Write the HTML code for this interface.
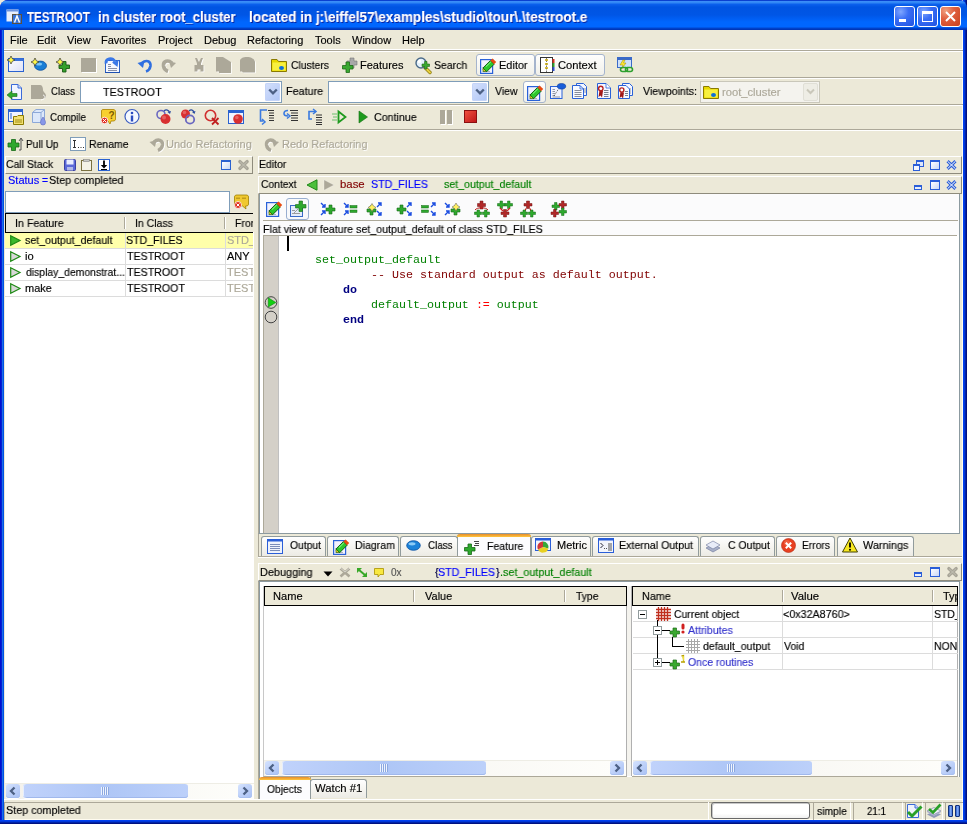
<!DOCTYPE html>
<html><head><meta charset="utf-8">
<style>
*{margin:0;padding:0;box-sizing:border-box}
html,body{width:967px;height:824px;overflow:hidden;background:#EEEADC;font-family:"Liberation Sans",sans-serif;font-size:11px;color:#000}
.a{position:absolute}
svg.a{overflow:visible}
.t{position:absolute;white-space:pre;line-height:13px;font-size:11px;will-change:transform;-webkit-text-stroke:0.15px currentColor}
#frame{position:absolute;left:0;top:0;width:967px;height:824px;background:linear-gradient(90deg,#0010D0 0,#0010D0 1px,#0620D0 1px,#0620D0 2px,#1A6CEA 2px,#1A6CEA 3px,#0052E2 3px,#0052E2 4px,#0A3BE0 4px);border-radius:8px 8px 0 0;overflow:hidden}
#frameR{position:absolute;left:963px;top:0;width:4px;height:824px;background:linear-gradient(90deg,#0040F0 0,#0040F0 1px,#0036D8 1px,#0036D8 2px,#0022A8 2px,#0022A8 3px,#001080 3px)}
#frameB{position:absolute;left:0;top:820px;width:967px;height:4px;background:linear-gradient(#0040F0 0,#0040F0 1px,#0036D8 1px,#0036D8 2px,#0022A8 2px,#0022A8 3px,#001080 3px)}
#title{position:absolute;left:0;top:0;width:967px;height:30px;border-radius:8px 8px 0 0;
 background:linear-gradient(180deg,#0A40D0 0px,#0A40D0 0.8px,#3D8EF9 1.2px,#3288F5 2.5px,#0A5FEC 4.5px,#0054E2 7px,#0056E6 15px,#005FF4 19px,#0066FE 22px,#0066FF 27px,#0046D0 28px,#0030B0 30px)}
#client{position:absolute;left:4px;top:30px;width:959px;height:790px;background:#ECE9D8;border-right:1px solid #FFFCF0;border-bottom:1px solid #FFFCF0}
.sep{position:absolute;left:4px;width:959px;height:2px;border-top:1px solid #ACA899;border-bottom:1px solid #fff}
.tb{position:absolute;border:1px solid #A5B4CD;border-radius:3px;background:linear-gradient(#FEFEFD,#F1F0EA)}
.combo{position:absolute;background:#fff;border:1px solid #7F9DB9}
.dd{position:absolute;width:15px;border-radius:2px;background:linear-gradient(135deg,#D4E0FC,#B0C6F6);box-shadow:inset 0 0 0 1px #C4D4F8}
.mono{font-family:"Liberation Mono",monospace}
.gray{color:#ACA899}
</style></head><body>
<div id="frame"></div>
<div id="frameR"></div>
<div id="frameB"></div>
<div id="title">
  <svg class="a" style="left:6px;top:9px" width="16" height="16" viewBox="0 0 16 16">
    <rect x="0.5" y="0.5" width="12" height="12" fill="#E8EEFC"/><rect x="0.5" y="0.5" width="12" height="2" fill="#6C93E0"/>
    <rect x="6.5" y="5.5" width="9" height="9" fill="#3A74D6" stroke="#5A5040" stroke-width="1"/>
    <path d="M8.5 13.5 L11 7 L13.5 13.5" stroke="#fff" stroke-width="1.4" fill="none"/>
  </svg>
  <div class="t" style="left:26.56px;top:10px;font-size:14px;font-weight:bold;color:#fff;line-height:15px;text-shadow:1px 1px 0 #0A1E9A;transform:scaleX(0.8240);transform-origin:0 0">TESTROOT</div>
  <div class="t" style="left:97.50px;top:10px;font-size:14px;font-weight:bold;color:#fff;line-height:15px;text-shadow:1px 1px 0 #0A1E9A;transform:scaleX(0.9358);transform-origin:0 0">in cluster root_cluster</div>
  <div class="t" style="left:248.89px;top:10px;font-size:14px;font-weight:bold;color:#fff;line-height:15px;text-shadow:1px 1px 0 #0A1E9A;transform:scaleX(0.9665);transform-origin:0 0">located in j:\eiffel57\examples\studio\tour\.\testroot.e</div>
  <!-- window buttons -->
  <div class="a" style="left:894px;top:6px;width:21px;height:21px;border:1px solid #fff;border-radius:3px;background:radial-gradient(circle at 30% 25%,#7FA6FF 0,#3A6EF5 40%,#1F52E0 100%)"><div class="a" style="left:4px;top:12px;width:7px;height:3px;background:#fff"></div></div>
  <div class="a" style="left:917px;top:6px;width:21px;height:21px;border:1px solid #fff;border-radius:3px;background:radial-gradient(circle at 30% 25%,#7FA6FF 0,#3A6EF5 40%,#1F52E0 100%)"><div class="a" style="left:4px;top:4px;width:11px;height:11px;border:1px solid #fff;border-top-width:3px"></div></div>
  <div class="a" style="left:940px;top:6px;width:21px;height:21px;border:1px solid #fff;border-radius:3px;background:radial-gradient(circle at 25% 20%,#F0A080 0,#E06040 40%,#C8401C 100%)">
    <svg class="a" style="left:4px;top:4px" width="11" height="11"><path d="M1 1 L10 10 M10 1 L1 10" stroke="#fff" stroke-width="2"/></svg></div>
</div>
<div id="client"></div>

<!-- menu -->
<div class="t" style="left:10px;top:34px">File</div>
<div class="t" style="left:37px;top:34px">Edit</div>
<div class="t" style="left:67px;top:34px">View</div>
<div class="t" style="left:101px;top:34px">Favorites</div>
<div class="t" style="left:158px;top:34px">Project</div>
<div class="t" style="left:204px;top:34px">Debug</div>
<div class="t" style="left:247px;top:34px">Refactoring</div>
<div class="t" style="left:315px;top:34px">Tools</div>
<div class="t" style="left:352px;top:34px">Window</div>
<div class="t" style="left:402px;top:34px">Help</div>
<div class="a" style="left:4px;top:49px;width:959px;height:3px;border-top:1px solid #fff;background:#ACA899;border-bottom:1px solid #fff"></div>
<div class="sep" style="top:77px"></div>
<div class="sep" style="top:104px"></div>
<div class="sep" style="top:129px"></div>

<!-- TOOLBAR1 -->
<svg class="a" style="left:8px;top:57px" width="16" height="16" viewBox="0 0 16 16">
 <defs><linearGradient id="gw" x1="0" y1="0" x2="1" y2="1"><stop offset="0" stop-color="#fff"/><stop offset="1" stop-color="#DCE0F8"/></linearGradient></defs>
 <rect x="0.5" y="1.5" width="15" height="13" fill="url(#gw)" stroke="#2A62D0"/><rect x="0.5" y="1.5" width="15" height="2.5" fill="#3B72DA"/>
 <path d="M3 -1 L4.3 1.7 L7 3 L4.3 4.3 L3 7 L1.7 4.3 L-1 3 L1.7 1.7Z" fill="#FFF84A" stroke="#333" stroke-width="0.7"/>
</svg>
<svg class="a" style="left:32px;top:57px" width="16" height="16" viewBox="0 0 16 16">
 <ellipse cx="8.5" cy="8.7" rx="6" ry="4.6" fill="#1A7ED6" stroke="#0A4FA0" stroke-width="0.8"/><ellipse cx="7" cy="7" rx="3" ry="1.5" fill="#7CC4F6"/>
 <path d="M3 1 L4.3 3.7 L7 5 L4.3 6.3 L3 9 L1.7 6.3 L-1 5 L1.7 3.7Z" fill="#FFF84A" stroke="#333" stroke-width="0.7"/>
</svg>
<svg class="a" style="left:56px;top:57px" width="16" height="16" viewBox="0 0 16 16">
 <path d="M6.5 4.5 H10 V8 H13.5 V11.5 H10 V15 H6.5 V11.5 H3 V8 H6.5Z" fill="#34A02C" stroke="#1A5A14" stroke-width="0.9"/>
 <path d="M4 1 L5.3 3.7 L8 5 L5.3 6.3 L4 9 L2.7 6.3 L0 5 L2.7 3.7Z" fill="#FFF84A" stroke="#333" stroke-width="0.7"/>
</svg>
<div class="a" style="left:81px;top:58px;width:15px;height:14px;background:#ACA899;box-shadow:1px 1px 0 #fff"></div>
<svg class="a" style="left:104px;top:57px" width="16" height="16" viewBox="0 0 16 16">
 <rect x="1.5" y="3.5" width="14" height="12" fill="#F6F8FF" stroke="#2E63C8"/><path d="M1 15.5 H16" stroke="#1E50B0"/>
 <path d="M4 7.5 H7 M4 9.5 H7 M4 11.5 H13 M4 13.5 H13" stroke="#8890A8"/>
 <path d="M2 6.5 C1.5 1.5 8 0 11 4.5" stroke="#3A78E8" stroke-width="2.8" fill="none"/><path d="M8 5.5 L14.5 3 L13.5 10Z" fill="#3A78E8"/>
</svg>
<svg class="a" style="left:137px;top:58px" width="16" height="16" viewBox="0 0 16 16">
 <path d="M5 5 C9 1.5 14 3 13.5 8 C13 11 11 12.8 9 13.5" stroke="#2F6FE0" stroke-width="2.6" fill="none"/>
 <path d="M0.5 5 L7.5 3 L6 10Z" fill="#2F6FE0"/>
</svg>
<svg class="a" style="left:161px;top:58px" width="16" height="16" viewBox="0 0 16 16">
 <path d="M11 5 C7 1.5 2 3 2.5 8 C3 11 5 12.8 7 13.5" stroke="#fff" stroke-width="3.6" fill="none" transform="translate(0.8,0.8)"/>
 <path d="M11 5 C7 1.5 2 3 2.5 8 C3 11 5 12.8 7 13.5" stroke="#ACA899" stroke-width="3.6" fill="none"/>
 <path d="M15 5 L8 3 L10 10Z" fill="#ACA899"/>
</svg>
<svg class="a" style="left:194px;top:57px" width="12" height="16" viewBox="0 0 12 16">
 <g transform="translate(0.8,0.8)" fill="#fff"><path d="M1 1 H3 L5 5 L7 1 H9 L7 6.5 V8 H9.5 V14.5 H6.5 V12.5 H3.5 V14.5 H0.5 V8 H3 V6.5Z"/></g>
 <path d="M1 1 H3 L5 5 L7 1 H9 L7 6.5 V8 H9.5 V14.5 H6.5 V12.5 H3.5 V14.5 H0.5 V8 H3 V6.5Z" fill="#ACA899"/>
</svg>
<svg class="a" style="left:216px;top:57px" width="16" height="17" viewBox="0 0 16 17">
 <path d="M0 0 H7 L15 5 V16 H3 V14.5 H0Z" fill="#fff" transform="translate(0.8,0.8)"/>
 <path d="M0 0 H7 L15 5 V16 H3 V14.5 H0Z" fill="#ACA899"/>
</svg>
<svg class="a" style="left:240px;top:57px" width="16" height="17" viewBox="0 0 16 17">
 <path d="M0 4 C0 1.5 3 0 7 0 C11 0 15 2 15 5 V15.5 H3 L2 14.5 H0Z" fill="#fff" transform="translate(0.8,0.8)"/>
 <path d="M0 4 C0 1.5 3 0 7 0 C11 0 15 2 15 5 V15.5 H3 L2 14.5 H0Z" fill="#ACA899"/>
</svg>
<svg class="a" style="left:271px;top:57px" width="16" height="16" viewBox="0 0 16 16">
 <path d="M0.5 2.5 H6 L7.5 4.5 H15.5 V14.5 H0.5Z" fill="#E8D800" stroke="#8A7A00"/><rect x="1.5" y="5.5" width="13" height="8" fill="#F8F040"/>
 <ellipse cx="10.5" cy="11" rx="2.5" ry="2" fill="#1070D8"/>
</svg>
<div class="t" style="left:291.00px;top:59px;transform:scaleX(0.9405);transform-origin:0 0">Clusters</div>
<svg class="a" style="left:342px;top:57px" width="16" height="16" viewBox="0 0 16 16">
 <path d="M8 1 H12 V4 H15 V8 H12 V11 H8 V8 H5 V4 H8Z" fill="#A8A8A8" stroke="#777" stroke-width="0.6"/>
 <path d="M4 5 H7.5 V8.5 H11 V12 H7.5 V15.5 H4 V12 H0.5 V8.5 H4Z" fill="#3AA830" stroke="#1E6A18" stroke-width="0.8"/>
</svg>
<div class="t" style="left:359.94px;top:59px;transform:scaleX(1.0004);transform-origin:0 0">Features</div>
<svg class="a" style="left:415px;top:57px" width="17" height="17" viewBox="0 0 17 17">
 <path d="M9 9.5 L15 15.5" stroke="#8A7A10" stroke-width="3.4" stroke-linecap="round"/><path d="M9 9.5 L15 15.5" stroke="#E8D040" stroke-width="2" stroke-linecap="round"/>
 <circle cx="6" cy="6" r="5" fill="#E4F2FC" stroke="#4A6A88" stroke-width="1.4"/><circle cx="4.5" cy="4.5" r="1.8" fill="#fff"/>
 <path d="M9.5 4.5 H12 V7 H14.5 V9.5 H12 V12 H9.5 V9.5 H7 V7 H9.5Z" fill="#3AA830" stroke="#1E6A18" stroke-width="0.6"/>
</svg>
<div class="t" style="left:433.63px;top:59px;transform:scaleX(0.9528);transform-origin:0 0">Search</div>
<div class="tb" style="left:476px;top:54px;width:59px;height:22px"></div>
<svg class="a" style="left:480px;top:57px" width="17" height="17" viewBox="0 0 17 17">
 <rect x="0.6" y="2.6" width="12" height="13.8" fill="#F2F2FD" stroke="#2A62D8" stroke-width="1.2"/><path d="M2.5 10.5 H5 M2.5 12.5 H5 M2.5 14.5 H10" stroke="#A0A0B0" stroke-width="0.8"/>
 <g transform="rotate(-45 9 8.5)"><rect x="3" y="6" width="10.5" height="5.2" fill="#2CC82C" stroke="#0E5A0E" stroke-width="0.9"/><path d="M6 7.2 H13" stroke="#7CF07C" stroke-width="1"/><rect x="13.5" y="6" width="3" height="5.2" fill="#E84A10"/><path d="M3 6 L0.5 8.6 L3 11.2Z" fill="#E8D020" stroke="#0E5A0E" stroke-width="0.6"/></g>
</svg>
<div class="t" style="left:498.95px;top:59px;transform:scaleX(0.9933);transform-origin:0 0">Editor</div>
<div class="tb" style="left:535px;top:54px;width:70px;height:22px"></div>
<svg class="a" style="left:539px;top:57px" width="16" height="16" viewBox="0 0 16 16">
 <rect x="1.5" y="0.5" width="12" height="15" fill="#fff" stroke="#333"/>
 <path d="M7.5 1 V15" stroke="#777" stroke-width="1" stroke-dasharray="1.5 1"/>
 <path d="M6 3 H9 M6 7 H9 M6 11 H9" stroke="#C8A800" stroke-width="1.5"/>
 <rect x="13.5" y="2" width="2" height="4" fill="#D83020"/><rect x="13.5" y="6" width="2" height="4" fill="#30A030"/><rect x="13.5" y="10" width="2" height="4" fill="#3050D0"/>
</svg>
<div class="t" style="left:558.34px;top:59px;transform:scaleX(1.0162);transform-origin:0 0">Context</div>
<svg class="a" style="left:617px;top:57px" width="16" height="16" viewBox="0 0 16 16">
 <rect x="0.5" y="0.5" width="14" height="10" fill="#CDE0FA" stroke="#3A6AC8"/><rect x="0.5" y="0.5" width="14" height="2.5" fill="#3A6AC8"/>
 <path d="M6 3 L3 8 H6 L4.5 12 L9 6 H6.5 L8 3Z" fill="#FFE830" stroke="#A08800" stroke-width="0.5"/>
 <rect x="3.5" y="10.5" width="7" height="4" rx="2" fill="none" stroke="#2EA02E" stroke-width="1.6"/><rect x="8.5" y="10.5" width="7" height="4" rx="2" fill="none" stroke="#2EA02E" stroke-width="1.6"/>
</svg>
<!-- /TOOLBAR1 -->

<!-- TOOLBAR2 -->
<svg class="a" style="left:7px;top:84px" width="16" height="16" viewBox="0 0 16 16">
 <path d="M4.5 0.5 H11 L14.5 4 V15.5 H4.5Z" fill="#F0F4FF" stroke="#3A6AD8"/><path d="M11 0.5 V4 H14.5" fill="#C8D8F8" stroke="#3A6AD8"/>
 <path d="M0 11 L5 7 V9.5 H10 V12.5 H5 V15Z" fill="#2EA82E" stroke="#1A6A1A" stroke-width="0.6"/>
</svg>
<svg class="a" style="left:31px;top:84px" width="16" height="16" viewBox="0 0 16 16">
 <path d="M0 1 H9 C11 1 12 3 12 6 C12 8 15 9 15 12 C15 15 12 15 10 15 H0Z" fill="#ACA899"/><path d="M12 11 C15 12 15 15 10 16" stroke="#fff" fill="none"/>
</svg>
<div class="t" style="left:50.58px;top:85px;transform:scaleX(0.8686);transform-origin:0 0">Class</div>
<div class="combo" style="left:80px;top:81px;width:202px;height:22px"></div>
<div class="t" style="left:103.13px;top:86px;font-size:11.5px;letter-spacing:0.2px;transform:scaleX(0.9156);transform-origin:0 0">TESTROOT</div>
<div class="dd" style="left:265px;top:83px;height:18px"></div>
<svg class="a" style="left:268px;top:88px" width="10" height="8"><path d="M1.2 1.5 L5 5.3 L8.8 1.5" stroke="#4D6185" stroke-width="2.4" fill="none"/></svg>
<div class="t" style="left:286.40px;top:85px;transform:scaleX(0.9796);transform-origin:0 0">Feature</div>
<div class="combo" style="left:328px;top:81px;width:161px;height:22px"></div>
<div class="dd" style="left:472px;top:83px;height:18px"></div>
<svg class="a" style="left:475px;top:88px" width="10" height="8"><path d="M1.2 1.5 L5 5.3 L8.8 1.5" stroke="#4D6185" stroke-width="2.4" fill="none"/></svg>
<div class="t" style="left:495.14px;top:85px;transform:scaleX(0.9509);transform-origin:0 0">View</div>
<div class="tb" style="left:523px;top:81px;width:23px;height:22px"></div>
<svg class="a" style="left:527px;top:84px" width="17" height="17" viewBox="0 0 17 17">
 <rect x="0.6" y="2.6" width="12" height="13.8" fill="#F2F2FD" stroke="#2A62D8" stroke-width="1.2"/><path d="M2.5 10.5 H5 M2.5 12.5 H5 M2.5 14.5 H10" stroke="#A0A0B0" stroke-width="0.8"/>
 <g transform="rotate(-45 9 8.5)"><rect x="3" y="6" width="10.5" height="5.2" fill="#2CC82C" stroke="#0E5A0E" stroke-width="0.9"/><path d="M6 7.2 H13" stroke="#7CF07C" stroke-width="1"/><rect x="13.5" y="6" width="3" height="5.2" fill="#E84A10"/><path d="M3 6 L0.5 8.6 L3 11.2Z" fill="#E8D020" stroke="#0E5A0E" stroke-width="0.6"/></g>
</svg>
<svg class="a" style="left:550px;top:83px" width="16" height="16" viewBox="0 0 16 16">
 <rect x="0.5" y="3.5" width="11.5" height="12" fill="#F2F4FE" stroke="#2A62D8"/>
 <path d="M2.5 6.5 H5 M2.5 8.5 H5 M2.5 10.5 H5 M2.5 12.5 H5 M2.5 14 H10" stroke="#7A8090" stroke-width="0.8"/><path d="M4 13 L8.5 6" stroke="#333" stroke-width="0.8" stroke-dasharray="1 1"/>
 <ellipse cx="11.5" cy="3.3" rx="4.2" ry="2.8" fill="#1A5ED8" stroke="#0A3A98" stroke-width="0.6"/>
</svg>
<svg class="a" style="left:572px;top:83px" width="16" height="16" viewBox="0 0 16 16">
 <path d="M4.5 0.5 H11.5 L14.5 3.5 V12.5 H4.5Z" fill="#F4F6FF" stroke="#2A62D8"/><path d="M11.5 12 V5 M13 10 V5" stroke="#7A8090" stroke-width="0.8"/>
 <path d="M0.5 2.5 H8 L11.5 6 V15.5 H0.5Z" fill="#F8FAFF" stroke="#2A62D8"/><path d="M8 2.5 V6 H11.5" fill="none" stroke="#2A62D8" stroke-width="0.8"/>
 <path d="M2.5 7.5 H9.5 M2.5 9.5 H9.5 M2.5 11.5 H9.5 M2.5 13.5 H9.5" stroke="#7A8090" stroke-width="0.9"/>
</svg>
<svg class="a" style="left:596px;top:83px" width="16" height="16" viewBox="0 0 16 16">
 <path d="M1.5 0.5 H10 L14.5 5 V15.5 H1.5Z" fill="#F4F6FF" stroke="#2A62D8"/><path d="M10 0.5 V5 H14.5" fill="#fff" stroke="#2A62D8" stroke-width="0.8"/>
 <path d="M8 7.5 H12.5 M8 9.5 H12.5 M8 11.5 H12.5 M8 13.5 H12.5" stroke="#6A7080" stroke-width="0.9"/>
 <path d="M3.5 7.5 L2.5 14 L4.5 12.5 L6 14.5 L7 8" fill="#A01818"/><circle cx="4.8" cy="5.5" r="2.9" fill="#B82020"/><circle cx="4.8" cy="5.5" r="1.5" fill="#fff"/>
</svg>
<svg class="a" style="left:618px;top:83px" width="16" height="16" viewBox="0 0 16 16">
 <path d="M4.5 0.5 H11.5 L14.5 3.5 V12.5 H4.5Z" fill="#F4F6FF" stroke="#2A62D8"/><path d="M12 11 V5" stroke="#7A8090" stroke-width="0.8"/>
 <path d="M0.5 2.5 H8 L11.5 6 V15.5 H0.5Z" fill="#F8FAFF" stroke="#2A62D8"/>
 <path d="M7 8.5 H10 M7 10.5 H10 M7 12.5 H10" stroke="#6A7080" stroke-width="0.9"/>
 <path d="M2.5 9 L1.5 15 L3.5 13.5 L5 15.5 L6 9.5" fill="#A01818"/><circle cx="3.8" cy="7" r="2.8" fill="#B82020"/><circle cx="3.8" cy="7" r="1.4" fill="#fff"/>
</svg>
<div class="t" style="left:643.00px;top:85px;transform:scaleX(0.9636);transform-origin:0 0">Viewpoints:</div>
<div class="a" style="left:700px;top:81px;width:120px;height:22px;border:1px solid #C9C7BA;background:#F4F3EE"></div>
<svg class="a" style="left:703px;top:84px" width="16" height="16" viewBox="0 0 16 16">
 <path d="M0.5 2.5 H6 L7.5 4.5 H15.5 V14.5 H0.5Z" fill="#E8D800" stroke="#8A7A00"/><rect x="1.5" y="5.5" width="13" height="8" fill="#F8F040"/>
 <ellipse cx="10.5" cy="11" rx="2.5" ry="2" fill="#1070D8"/>
</svg>
<div class="t gray" style="left:721.93px;top:86px;transform:scaleX(1.0179);transform-origin:0 0">root_cluster</div>
<div class="a" style="left:803px;top:83px;width:15px;height:18px;border-radius:2px;background:#EEEDE5;border:1px solid #E0DFD6"></div>
<svg class="a" style="left:806px;top:88px" width="9" height="7"><path d="M1 1.5 L4.5 5 L8 1.5" stroke="#C9C7BA" stroke-width="2" fill="none"/></svg>
<!-- /TOOLBAR2 -->

<!-- TOOLBAR3 -->
<svg class="a" style="left:8px;top:109px" width="16" height="16" viewBox="0 0 16 16">
 <rect x="0.5" y="0.5" width="14" height="12" fill="#F0F4FF" stroke="#2A62D0"/><rect x="0.5" y="0.5" width="14" height="2.5" fill="#2A62D0"/>
 <path d="M2 5 H4 M2 7 H4 M2 9 H4" stroke="#2A62D0"/>
 <path d="M5.5 7.5 H9 L10 6.5 H15.5 V15.5 H5.5Z" fill="#F2E070" stroke="#8A7A00"/><path d="M7 11 H14 M7 13 H14" stroke="#8A7A00" stroke-width="0.8"/>
</svg>
<svg class="a" style="left:31px;top:109px" width="16" height="16" viewBox="0 0 16 16">
 <path d="M1.5 3.5 L5 0.5 H13.5 V10 L10 13.5 H1.5Z" fill="#DCE8FA" stroke="#8CA8D8"/><path d="M1.5 3.5 H10 V13.5 M10 3.5 L13.5 0.5" stroke="#8CA8D8" fill="none"/>
 <path d="M12 8 C10 11 9.5 12.5 9.5 13.5 A2.5 2.5 0 0 0 14.5 13.5 C14.5 12.5 14 11 12 8Z" fill="#8898E8" stroke="#5A68C0" stroke-width="0.6"/>
</svg>
<div class="t" style="left:50.36px;top:111px;transform:scaleX(0.8905);transform-origin:0 0">Compile</div>
<svg class="a" style="left:100px;top:109px" width="16" height="16" viewBox="0 0 16 16">
 <path d="M1.5 2 C1.5 0.5 2.5 0.5 4 0.5 H13 C14.5 0.5 15.5 1 15.5 3 V10 C15.5 11.5 14.5 12 13 12 H11 L10 15 L8 12 H4 C2.5 12 1.5 11.5 1.5 10Z" fill="#F8D030" stroke="#A88000" stroke-width="0.8"/>
 <text x="8.5" y="9.5" font-size="10" font-family="Liberation Sans" font-weight="bold" fill="#7A5A00">?</text>
 <circle cx="4.5" cy="11.5" r="3.3" fill="#E03020" stroke="#fff" stroke-width="0.8"/><path d="M3 10 L6 13 M6 10 L3 13" stroke="#fff" stroke-width="1"/>
</svg>
<svg class="a" style="left:124px;top:109px" width="16" height="16" viewBox="0 0 16 16">
 <circle cx="8" cy="7.5" r="7" fill="#F4F8FF" stroke="#3A5CC0" stroke-width="1.2"/>
 <circle cx="8" cy="4" r="1.3" fill="#2A4CC0"/><rect x="6.8" y="6.5" width="2.4" height="6" fill="#2A4CC0"/>
</svg>
<svg class="a" style="left:156px;top:109px" width="16" height="16" viewBox="0 0 16 16">
 <circle cx="5" cy="5.5" r="4" fill="none" stroke="#6A68C0" stroke-width="1.6"/>
 <path d="M8 2 C10 0 13 1 13.5 3.5" stroke="#2A4CA0" stroke-width="1.2" fill="none"/><path d="M11.5 3 L14 5 L15 2Z" fill="#2A4CA0"/>
 <circle cx="9.5" cy="10" r="5" fill="#D83030"/><circle cx="8" cy="8.5" r="2" fill="#F08080" opacity="0.6"/>
</svg>
<svg class="a" style="left:180px;top:109px" width="16" height="16" viewBox="0 0 16 16">
 <circle cx="5.5" cy="5" r="4.5" fill="#D83030"/><circle cx="4.5" cy="3.5" r="1.8" fill="#F08080" opacity="0.6"/>
 <path d="M9 2 C11 0 13.5 1 14 3.5" stroke="#2A4CA0" stroke-width="1.2" fill="none"/><path d="M12 3 L14.5 5 L15.5 2Z" fill="#2A4CA0"/>
 <circle cx="10" cy="10.5" r="4.2" fill="none" stroke="#6A68C0" stroke-width="1.8"/>
</svg>
<svg class="a" style="left:204px;top:109px" width="16" height="16" viewBox="0 0 16 16">
 <circle cx="6.5" cy="6.5" r="5.2" fill="none" stroke="#D03030" stroke-width="1.6"/>
 <path d="M8 9 L14.5 15.5 M14.5 9 L8 15.5" stroke="#C02020" stroke-width="1.8"/>
</svg>
<svg class="a" style="left:228px;top:109px" width="16" height="16" viewBox="0 0 16 16">
 <rect x="0.5" y="1.5" width="15" height="13" fill="#F0F4FF" stroke="#2A62D0"/><rect x="0.5" y="1.5" width="15" height="2.5" fill="#2A62D0"/>
 <circle cx="10" cy="10" r="4.8" fill="#D83030"/><circle cx="8.8" cy="8.5" r="1.8" fill="#F08080" opacity="0.6"/>
</svg>
<svg class="a" style="left:259px;top:109px" width="16" height="16" viewBox="0 0 16 16">
 <path d="M8 1 H1.5 V12 H4" stroke="#3A7AE0" stroke-width="1.6" fill="none"/><path d="M3 10 L6 13 L3 15.5" stroke="#3A7AE0" stroke-width="1.5" fill="none"/>
 <path d="M9 1.5 H15 M10 4 H15 M10 6.5 H15 M10 9 H15 M10 11.5 H15" stroke="#333" stroke-width="1"/>
</svg>
<svg class="a" style="left:283px;top:109px" width="16" height="16" viewBox="0 0 16 16">
 <path d="M5 1.5 C2 1.5 1 3 1 4.5 C1 6 2 7 5 7" stroke="#3A7AE0" stroke-width="1.6" fill="none"/><path d="M4 4.5 L7 7 L4 9.5" stroke="#3A7AE0" stroke-width="1.5" fill="none"/>
 <path d="M7 1.5 H15 M8 4 H15 M8 6.5 H15 M8 9 H15 M8 11.5 H15" stroke="#333" stroke-width="1"/>
</svg>
<svg class="a" style="left:307px;top:109px" width="16" height="16" viewBox="0 0 16 16">
 <path d="M9 2.5 H2 V10 H5" stroke="#3A7AE0" stroke-width="1.6" fill="none"/><path d="M6 0 L9 2.5 L6 5" stroke="#3A7AE0" stroke-width="1.5" fill="none"/>
 <path d="M9 6 H15 M9 8.5 H15 M9 11 H15 M9 13.5 H15 M9 15.5 H15" stroke="#333" stroke-width="1"/>
</svg>
<svg class="a" style="left:331px;top:109px" width="16" height="16" viewBox="0 0 16 16">
 <path d="M7.5 2.5 L14.5 8 L7.5 13.5Z" fill="none" stroke="#1E9A1E" stroke-width="1.8"/>
 <path d="M1 5 H6 M2 8 H6 M1 11 H6" stroke="#6AC06A" stroke-width="1"/>
</svg>
<svg class="a" style="left:357px;top:109px" width="12" height="16" viewBox="0 0 12 16">
 <path d="M2 2 L10.5 8 L2 14Z" fill="#1E9A1E" stroke="#117011" stroke-width="0.6"/>
</svg>
<div class="t" style="left:374.34px;top:111px;transform:scaleX(0.9685);transform-origin:0 0">Continue</div>
<div class="a" style="left:440px;top:110px;width:5px;height:14px;background:#ACA899;box-shadow:1px 1px 0 #fff"></div>
<div class="a" style="left:447px;top:110px;width:5px;height:14px;background:#ACA899;box-shadow:1px 1px 0 #fff"></div>
<div class="a" style="left:464px;top:110px;width:13px;height:13px;background:linear-gradient(135deg,#F05040,#C01818);border:1px solid #8A1010"></div>
<!-- /TOOLBAR3 -->

<!-- TOOLBAR4 -->
<svg class="a" style="left:8px;top:136px" width="16" height="16" viewBox="0 0 16 16">
 <path d="M3.5 5.5 H7.5 V9 H11 V13 H7.5 V16.5 H3.5 V13 H0 V9 H3.5Z" fill="#2EA82E" stroke="#166A16" stroke-width="0.8" transform="translate(0,-2)"/>
 <path d="M11 14 H13 V2.5" stroke="#555" stroke-width="1" fill="none"/><path d="M11 5 L13 2 L15 5" stroke="#555" stroke-width="1" fill="none"/>
</svg>
<div class="t" style="left:25.82px;top:138px;transform:scaleX(0.9184);transform-origin:0 0">Pull Up</div>
<div class="a" style="left:70px;top:137px;width:16px;height:14px;border:1px solid #7F9DB9;background:#fff"></div>
<svg class="a" style="left:70px;top:137px" width="16" height="14" viewBox="0 0 16 14"><path d="M3 3.5 H6 M4.5 3.5 V10.5 M3 10.5 H6" stroke="#333" stroke-width="1"/><path d="M8 10.5 H9 M10.5 10.5 H11.5 M13 10.5 H14" stroke="#333" stroke-width="1"/></svg>
<div class="t" style="left:88.61px;top:138px;transform:scaleX(0.9510);transform-origin:0 0">Rename</div>
<svg class="a" style="left:149px;top:137px" width="16" height="16" viewBox="0 0 16 16">
 <path d="M5 5 C9 1.5 14 3 13.5 8 C13 11 11 12.8 9 13.5" stroke="#fff" stroke-width="3.4" fill="none" transform="translate(0.8,0.8)"/>
 <path d="M5 5 C9 1.5 14 3 13.5 8 C13 11 11 12.8 9 13.5" stroke="#ACA899" stroke-width="3.4" fill="none"/>
 <path d="M0.5 5 L7.5 3 L6 10Z" fill="#ACA899"/>
</svg>
<div class="t gray" style="left:166.36px;top:138px;text-shadow:1px 1px 0 #fff;transform:scaleX(1.0024);transform-origin:0 0">Undo Refactoring</div>
<svg class="a" style="left:264px;top:137px" width="16" height="16" viewBox="0 0 16 16">
 <path d="M11 5 C7 1.5 2 3 2.5 8 C3 11 5 12.8 7 13.5" stroke="#fff" stroke-width="3.4" fill="none" transform="translate(0.8,0.8)"/>
 <path d="M11 5 C7 1.5 2 3 2.5 8 C3 11 5 12.8 7 13.5" stroke="#ACA899" stroke-width="3.4" fill="none"/>
 <path d="M15 5 L8 3 L10 10Z" fill="#ACA899"/>
</svg>
<div class="t gray" style="left:281.55px;top:138px;text-shadow:1px 1px 0 #fff;transform:scaleX(0.9978);transform-origin:0 0">Redo Refactoring</div>
<!-- /TOOLBAR4 -->

<!-- CALLSTACK -->
<div class="a" style="left:5px;top:156px;width:248px;height:18px;border-top:1px solid #fff;border-left:1px solid #fff;border-bottom:1px solid #8E8B7C;border-right:1px solid #8E8B7C"></div>
<div class="t" style="left:6.36px;top:158px;transform:scaleX(0.9513);transform-origin:0 0">Call Stack</div>
<svg class="a" style="left:64px;top:159px" width="12" height="12" viewBox="0 0 12 12">
 <rect x="0.5" y="0.5" width="11" height="11" rx="1" fill="#5A68D8" stroke="#3A40A0"/><rect x="2.5" y="0.5" width="7" height="5" fill="#E8ECFF"/><rect x="3" y="8" width="6" height="3.5" fill="#B0B8E8"/>
</svg>
<svg class="a" style="left:81px;top:159px" width="12" height="12" viewBox="0 0 12 12">
 <rect x="0.5" y="1.5" width="10" height="10" fill="#F4F2E8" stroke="#7A7040"/><rect x="2.5" y="0.5" width="6" height="2" fill="#C8C8C8" stroke="#777" stroke-width="0.5"/>
</svg>
<svg class="a" style="left:98px;top:159px" width="12" height="12" viewBox="0 0 12 12">
 <rect x="0.5" y="0.5" width="11" height="11" fill="#fff" stroke="#2A62D0"/><path d="M6 1.5 V8" stroke="#000" stroke-width="1.8"/><path d="M2.8 6 L6 9.5 L9.2 6Z" fill="#000"/><path d="M3 10.5 H9" stroke="#000"/>
</svg>
<div class="a" style="left:221px;top:160px;width:10px;height:10px;border:1px solid #2A62D0;border-top-width:2px;background:linear-gradient(135deg,#fff,#C8D8F4)"></div>
<svg class="a" style="left:238px;top:160px" width="11" height="10" viewBox="0 0 11 10">
 <path d="M1.8 1.5 L9.2 8.5 M9.2 1.5 L1.8 8.5" stroke="#A8A598" stroke-width="3.2" stroke-linecap="round"/><path d="M2 1.7 L9 8.3 M9 1.7 L2 8.3" stroke="#C8C6BA" stroke-width="0.8"/>
</svg>
<div class="t" style="left:7.56px;top:174px;color:#0000FF;transform:scaleX(1.0012);transform-origin:0 0">Status</div>
<div class="t" style="left:42.2px;top:174px;color:#0000FF;transform:scaleX(0.95);transform-origin:0 0">=</div>
<div class="t" style="left:48.6px;top:174px;transform:scaleX(0.975);transform-origin:0 0">Step completed</div>
<div class="a" style="left:5px;top:191px;width:225px;height:22px;background:#fff;border:1px solid #7F9DB9"></div>
<svg class="a" style="left:233px;top:194px" width="16" height="16" viewBox="0 0 16 16">
 <path d="M1.5 3 C1.5 1.5 2.5 1 4 1 H13 C14.5 1 15.5 1.5 15.5 3 V10 C15.5 11.5 14.5 12 13 12 H12.5 L13 15 L9.5 12 H4 C2.5 12 1.5 11.5 1.5 10Z" fill="#F0C830" stroke="#A08000" stroke-width="0.8"/>
 <path d="M4 3.5 V5 M6 3.5 V5 M10 3.5 V5 M12 3.5 V5" stroke="#7A5A00" stroke-width="0.8"/>
 <circle cx="5" cy="11" r="3.5" fill="#E03020" stroke="#fff" stroke-width="0.8"/><path d="M3.5 9.5 L6.5 12.5 M6.5 9.5 L3.5 12.5" stroke="#fff" stroke-width="1"/>
</svg>
<!-- grid -->
<div class="a" style="left:5px;top:232px;width:249px;height:551px;background:#fff"></div>
<div class="a" style="left:5px;top:213px;width:248px;height:20px;background:#ECE9D8;border:1px solid #000;border-right:none"></div>
<div class="a" style="left:124px;top:217px;width:1px;height:12px;background:#ACA899;box-shadow:1px 0 0 #fff"></div>
<div class="a" style="left:224px;top:217px;width:1px;height:12px;background:#ACA899;box-shadow:1px 0 0 #fff"></div>
<div class="t" style="left:14.97px;top:217px;transform:scaleX(0.9717);transform-origin:0 0">In Feature</div>
<div class="t" style="left:134.79px;top:217px;transform:scaleX(0.9546);transform-origin:0 0">In Class</div>
<div class="a" style="left:226px;top:214px;width:27px;height:18px;overflow:hidden"><div class="t" style="left:9px;top:3px;transform:scaleX(0.95);transform-origin:0 0">From</div></div>
<div class="a" style="left:5px;top:233px;width:248px;height:15px;background:#FFFFAA"></div>
<div class="a" style="left:5px;top:248px;width:248px;height:1px;background:#DCDCDC"></div>
<div class="a" style="left:5px;top:264px;width:248px;height:1px;background:#DCDCDC"></div>
<div class="a" style="left:5px;top:280px;width:248px;height:1px;background:#DCDCDC"></div>
<div class="a" style="left:5px;top:296px;width:248px;height:1px;background:#DCDCDC"></div>
<div class="a" style="left:125px;top:233px;width:1px;height:63px;background:#DCDCDC"></div>
<div class="a" style="left:225px;top:233px;width:1px;height:63px;background:#DCDCDC"></div>
<svg class="a" style="left:10px;top:235px" width="11" height="11" viewBox="0 0 11 11"><path d="M0.7 0.7 L10 5.5 L0.7 10.3Z" fill="#3CB82C" stroke="#1E8A14" stroke-width="1.2"/></svg>
<svg class="a" style="left:10px;top:251px" width="11" height="11" viewBox="0 0 11 11"><path d="M0.7 0.7 L10 5.5 L0.7 10.3Z" fill="#D8D8D8" stroke="#1E8A14" stroke-width="1.2"/></svg>
<svg class="a" style="left:10px;top:267px" width="11" height="11" viewBox="0 0 11 11"><path d="M0.7 0.7 L10 5.5 L0.7 10.3Z" fill="#D8D8D8" stroke="#1E8A14" stroke-width="1.2"/></svg>
<svg class="a" style="left:10px;top:283px" width="11" height="11" viewBox="0 0 11 11"><path d="M0.7 0.7 L10 5.5 L0.7 10.3Z" fill="#D8D8D8" stroke="#1E8A14" stroke-width="1.2"/></svg>
<div class="t" style="left:25.00px;top:234px;transform:scaleX(0.9670);transform-origin:0 0">set_output_default</div>
<div class="t" style="left:24.81px;top:250px;transform:scaleX(1.0178);transform-origin:0 0">io</div>
<div class="t" style="left:25.97px;top:266px;transform:scaleX(0.9456);transform-origin:0 0">display_demonstrat...</div>
<div class="t" style="left:24.92px;top:282px;transform:scaleX(0.9937);transform-origin:0 0">make</div>
<div class="t" style="left:126.21px;top:234px;transform:scaleX(0.9653);transform-origin:0 0">STD_FILES</div>
<div class="t" style="left:127.00px;top:250px;transform:scaleX(0.9667);transform-origin:0 0">TESTROOT</div>
<div class="t" style="left:126.83px;top:266px;transform:scaleX(0.9689);transform-origin:0 0">TESTROOT</div>
<div class="t" style="left:127.00px;top:282px;transform:scaleX(0.9667);transform-origin:0 0">TESTROOT</div>
<div class="a" style="left:226px;top:233px;width:27px;height:63px;overflow:hidden">
 <div class="t gray" style="left:1px;top:1px">STD_FILES</div>
 <div class="t" style="left:1px;top:17px">ANY</div>
 <div class="t gray" style="left:1px;top:33px">TESTROOT</div>
 <div class="t gray" style="left:1px;top:49px">TESTROOT</div>
</div>
<!-- scrollbar -->
<div class="a" style="left:5px;top:783px;width:249px;height:16px;background:linear-gradient(90deg,#F3F1EC,#FEFEFB);border-top:1px solid #EEEDE5"></div><div class="a" style="left:6px;top:784px;width:14px;height:14px;border-radius:3px;background:linear-gradient(135deg,#D4E2FE,#A8C0F4);box-shadow:inset 0 -1px 0 #A8C0F0, 0 1px 0 #fff"></div><svg class="a" style="left:9px;top:786px" width="8" height="10"><path d="M5.5 1.5 L2 5 L5.5 8.5" stroke="#4D6185" stroke-width="2.3" fill="none"/></svg><div class="a" style="left:23px;top:784px;width:165px;height:14px;border-radius:3px;background:linear-gradient(90deg,#C0D2FB,#AEC6F6 50%,#BCD0FA);box-shadow:inset 1px 0 0 #E6EEFE,inset 0 -1px 0 #A0B8EC, 0 1px 0 #fff"></div><svg class="a" style="left:101px;top:787px" width="8" height="8"><path d="M0.5 0 V8 M2.5 0 V8 M4.5 0 V8 M6.5 0 V8" stroke="#EEF4FE" stroke-width="1"/><path d="M1.5 0 V8 M3.5 0 V8 M5.5 0 V8 M7.5 0 V8" stroke="#8CA8E0" stroke-width="1"/></svg><div class="a" style="left:238px;top:784px;width:14px;height:14px;border-radius:3px;background:linear-gradient(135deg,#D4E2FE,#A8C0F4);box-shadow:inset 0 -1px 0 #A8C0F0, 0 1px 0 #fff"></div><svg class="a" style="left:241px;top:786px" width="8" height="10"><path d="M2.5 1.5 L6 5 L2.5 8.5" stroke="#4D6185" stroke-width="2.3" fill="none"/></svg>
<!-- /CALLSTACK -->

<!-- EDITOR -->
<div class="a" style="left:258px;top:156px;width:704px;height:18px;border-top:1px solid #fff;border-left:1px solid #fff;border-bottom:1px solid #8E8B7C;border-right:1px solid #8E8B7C"></div>
<div class="t" style="left:259.02px;top:158px;transform:scaleX(0.9510);transform-origin:0 0">Editor</div>
<svg class="a" style="left:913px;top:160px" width="11" height="11" viewBox="0 0 11 11">
 <rect x="3.5" y="0.5" width="7" height="6" fill="#DDE6FA" stroke="#2A5ED8"/><rect x="3.5" y="0.5" width="7" height="1.5" fill="#2A5ED8"/>
 <rect x="0.5" y="4.5" width="6" height="6" fill="#F2F5FE" stroke="#2A5ED8"/><rect x="0.5" y="4.5" width="6" height="1.5" fill="#2A5ED8"/>
</svg>
<div class="a" style="left:930px;top:160px;width:10px;height:10px;border:1px solid #2A5ED8;border-top-width:2px;background:linear-gradient(135deg,#fff,#C8D6F6)"></div>
<svg class="a" style="left:946px;top:160px" width="11" height="10" viewBox="0 0 11 10">
 <path d="M1.5 1.2 L9.5 8.8 M9.5 1.2 L1.5 8.8" stroke="#2A5ED8" stroke-width="3"/><path d="M1.5 1.2 L9.5 8.8 M9.5 1.2 L1.5 8.8" stroke="#fff" stroke-width="1"/>
</svg>
<div class="a" style="left:258px;top:176px;width:704px;height:18px;border-top:1px solid #fff;border-left:1px solid #fff;border-bottom:1px solid #8E8B7C;border-right:1px solid #8E8B7C"></div>
<div class="t" style="left:260.96px;top:178px;transform:scaleX(0.9374);transform-origin:0 0">Context</div>
<svg class="a" style="left:306px;top:179px" width="12" height="12" viewBox="0 0 12 12"><path d="M1 6 L11 0.8 V11.2Z" fill="#4CC03C" stroke="#208818" stroke-width="1"/></svg>
<svg class="a" style="left:323px;top:179px" width="12" height="12" viewBox="0 0 12 12"><path d="M11 6 L1 0.8 V11.2Z" fill="#ACA899" stroke="#fff" stroke-width="0.3"/></svg>
<div class="t" style="left:339.51px;top:178px;color:#800000;transform:scaleX(1.0353);transform-origin:0 0">base</div>
<div class="t" style="left:370.99px;top:178px;color:#0000FF;transform:scaleX(0.9719);transform-origin:0 0">STD_FILES</div>
<div class="t" style="left:444.15px;top:178px;color:#008000;transform:scaleX(0.9648);transform-origin:0 0">set_output_default</div>
<div class="a" style="left:914px;top:185px;width:8px;height:5px;border:1px solid #2A5ED8;border-top-width:2px;background:#E6ECFB"></div>
<div class="a" style="left:930px;top:180px;width:10px;height:10px;border:1px solid #2A5ED8;border-top-width:2px;background:linear-gradient(135deg,#fff,#C8D6F6)"></div>
<svg class="a" style="left:946px;top:180px" width="11" height="10" viewBox="0 0 11 10">
 <path d="M1.5 1.2 L9.5 8.8 M9.5 1.2 L1.5 8.8" stroke="#2A5ED8" stroke-width="3"/><path d="M1.5 1.2 L9.5 8.8 M9.5 1.2 L1.5 8.8" stroke="#fff" stroke-width="1"/>
</svg>
<!-- content frame -->
<div class="a" style="left:258px;top:194px;width:702px;height:340px;border-left:1px solid #ACA899;border-right:1px solid #8C9AA0;border-bottom:1px solid #8C9AA0;box-shadow:inset 1px 0 0 #8C9AA0;background:#fff"></div>
<div class="a" style="left:258px;top:534px;width:1px;height:22px;background:#ACA899"></div>
<div class="a" style="left:260px;top:194px;width:699px;height:41px;background:#FBFBFC"></div>
<div class="a" style="left:263px;top:220px;width:695px;height:1px;background:#ACA899"></div>
<div class="a" style="left:263px;top:235px;width:694px;height:1px;background:#ACA899"></div>
<div class="t" style="left:262.79px;top:223px;transform:scaleX(0.9693);transform-origin:0 0">Flat view of feature set_output_default of class STD_FILES</div>
<div class="a" style="left:263px;top:236px;width:16px;height:297px;background:#D4D0C8;border-left:1px solid #ACA899;border-right:1px solid #C0C0C0"></div>
<div class="a" style="left:287px;top:236px;width:2px;height:15px;background:#000"></div>
<!-- editor toolbar icons -->
<svg class="a" style="left:266px;top:200px" width="17" height="17" viewBox="0 0 17 17">
 <rect x="0.6" y="2.6" width="12" height="13.8" fill="#F2F2FD" stroke="#2A62D8" stroke-width="1.2"/><path d="M2.5 10.5 H5 M2.5 12.5 H5 M2.5 14.5 H10" stroke="#A0A0B0" stroke-width="0.8"/>
 <g transform="rotate(-45 9 8.5)"><rect x="3" y="6" width="10.5" height="5.2" fill="#2CC82C" stroke="#0E5A0E" stroke-width="0.9"/><path d="M6 7.2 H13" stroke="#7CF07C" stroke-width="1"/><rect x="13.5" y="6" width="3" height="5.2" fill="#E84A10"/><path d="M3 6 L0.5 8.6 L3 11.2Z" fill="#E8D020" stroke="#0E5A0E" stroke-width="0.6"/></g>
</svg>
<div class="tb" style="left:286px;top:198px;width:23px;height:22px;border-color:#98AED0;background:#F8F9FB"></div>
<svg class="a" style="left:290px;top:201px" width="16" height="16" viewBox="0 0 16 16">
 <rect x="0.5" y="4.5" width="12" height="11" fill="#E4ECFA" stroke="#3A6AC8"/><path d="M2 12.5 H10 M2 9.5 H5 M4 12 L8 8" stroke="#888" stroke-width="0.8"/>
 <path d="M9 0 H12.5 V3.5 H16 V7 H12.5 V10.5 H9 V7 H5.5 V3.5 H9Z" fill="#2EA82E" stroke="#166A16" stroke-width="0.6"/>
</svg>
<!-- arrows+cross icons -->
<svg class="a" style="left:320px;top:202px" width="16" height="14" viewBox="0 0 16 14">
 <path d="M1 1 L5 5 M5 2 V5 H2 M1 13 L5 9 M2 9 H5 V12" stroke="#1A4CE0" stroke-width="1.4" fill="none"/>
 <path d="M9 3 H12 V6 H15 V9 H12 V12 H9 V9 H6 V6 H9Z" fill="#2EA82E" stroke="#166A16" stroke-width="0.6"/>
</svg>
<svg class="a" style="left:343px;top:202px" width="16" height="14" viewBox="0 0 16 14">
 <path d="M1 1 L5 5 M5 2 V5 H2 M1 13 L5 9 M2 9 H5 V12" stroke="#1A4CE0" stroke-width="1.4" fill="none"/>
 <rect x="7" y="3.5" width="7" height="2.5" fill="#2EA82E" stroke="#166A16" stroke-width="0.5"/><rect x="7" y="8" width="7" height="2.5" fill="#2EA82E" stroke="#166A16" stroke-width="0.5"/>
</svg>
<svg class="a" style="left:367px;top:202px" width="16" height="14" viewBox="0 0 16 14">
 <path d="M3 4 H6 V7 H9 V10 H6 V13 H3 V10 H0 V7 H3Z" fill="#2EA82E" stroke="#166A16" stroke-width="0.6"/>
 <path d="M5 1.5 L6.5 4 L9 5.5 L6.5 7 L5 9.5 L3.5 7 L1 5.5 L3.5 4Z" fill="#FFF060" stroke="#555" stroke-width="0.5"/>
 <path d="M10 5 L14 1 M11 1 H14 V4 M10 9 L14 13 M14 10 V13 H11" stroke="#1A4CE0" stroke-width="1.4" fill="none"/>
</svg>
<svg class="a" style="left:397px;top:202px" width="16" height="14" viewBox="0 0 16 14">
 <path d="M3 3 H6 V6 H9 V9 H6 V12 H3 V9 H0 V6 H3Z" fill="#2EA82E" stroke="#166A16" stroke-width="0.6"/>
 <path d="M10 5 L14 1 M11 1 H14 V4 M10 9 L14 13 M14 10 V13 H11" stroke="#1A4CE0" stroke-width="1.4" fill="none"/>
</svg>
<svg class="a" style="left:421px;top:202px" width="16" height="14" viewBox="0 0 16 14">
 <rect x="0.5" y="3.5" width="7" height="2.5" fill="#2EA82E" stroke="#166A16" stroke-width="0.5"/><rect x="0.5" y="8" width="7" height="2.5" fill="#2EA82E" stroke="#166A16" stroke-width="0.5"/>
 <path d="M10 5 L14 1 M11 1 H14 V4 M10 9 L14 13 M14 10 V13 H11" stroke="#1A4CE0" stroke-width="1.4" fill="none"/>
</svg>
<svg class="a" style="left:444px;top:202px" width="16" height="14" viewBox="0 0 16 14">
 <path d="M1 1 L5 5 M5 2 V5 H2 M1 13 L5 9 M2 9 H5 V12" stroke="#1A4CE0" stroke-width="1.4" fill="none"/>
 <path d="M10 4 H13 V7 H16 V10 H13 V13 H10 V10 H7 V7 H10Z" fill="#2EA82E" stroke="#166A16" stroke-width="0.6"/>
 <path d="M12 1 L13.5 3.5 L16 5 L13.5 6.5 L12 9 L10.5 6.5 L8 5 L10.5 3.5Z" fill="#FFF060" stroke="#555" stroke-width="0.5"/>
</svg>
<svg class="a" style="left:474px;top:201px" width="16" height="16" viewBox="0 0 16 16">
 <path d="M6 0 H9 V2.5 H11.5 V5.5 H9 V8 H6 V5.5 H3.5 V2.5 H6Z" fill="#B02828" stroke="#701010" stroke-width="0.5"/>
 <path d="M1 9 C3 6 12 6 14 9" stroke="#C02020" fill="none"/>
 <path d="M3 9 H5.5 V11 H7.5 V13.5 H5.5 V16 H3 V13.5 H0.5 V11 H3Z" fill="#2EA82E" stroke="#166A16" stroke-width="0.5"/>
 <path d="M10.5 9 H13 V11 H15.5 V13.5 H13 V16 H10.5 V13.5 H8.5 V11 H10.5Z" fill="#2EA82E" stroke="#166A16" stroke-width="0.5"/>
</svg>
<svg class="a" style="left:497px;top:201px" width="16" height="16" viewBox="0 0 16 16">
 <path d="M3 0 H5.5 V2.5 H8 V5 H5.5 V7.5 H3 V5 H0.5 V2.5 H3Z" fill="#2EA82E" stroke="#166A16" stroke-width="0.5"/>
 <path d="M10.5 0 H13 V2.5 H15.5 V5 H13 V7.5 H10.5 V5 H8 V2.5 H10.5Z" fill="#2EA82E" stroke="#166A16" stroke-width="0.5"/>
 <path d="M3 7 L6 10 M13 7 L10 10" stroke="#D02020" stroke-width="1.2"/>
 <path d="M6.5 8.5 H9.5 V11 H12 V13.5 H9.5 V16 H6.5 V13.5 H4 V11 H6.5Z" fill="#B02828" stroke="#701010" stroke-width="0.5"/>
</svg>
<svg class="a" style="left:520px;top:201px" width="16" height="16" viewBox="0 0 16 16">
 <path d="M6.5 0 H9.5 V2.5 H12 V5 H9.5 V7.5 H6.5 V5 H4 V2.5 H6.5Z" fill="#B02828" stroke="#701010" stroke-width="0.5"/>
 <path d="M6 7.5 L5 10 M10 7.5 L11 10" stroke="#D02020" stroke-width="1.2"/>
 <path d="M3 9 H5.5 V11 H7.5 V13.5 H5.5 V16 H3 V13.5 H0.5 V11 H3Z" fill="#2EA82E" stroke="#166A16" stroke-width="0.5"/>
 <path d="M10.5 9 H13 V11 H15.5 V13.5 H13 V16 H10.5 V13.5 H8.5 V11 H10.5Z" fill="#2EA82E" stroke="#166A16" stroke-width="0.5"/>
</svg>
<svg class="a" style="left:551px;top:201px" width="16" height="16" viewBox="0 0 16 16">
 <path d="M3.5 1.5 H6 V4 H8.5 V6.5 H6 V9 H3.5 V6.5 H1 V4 H3.5Z" fill="#2EA82E" stroke="#166A16" stroke-width="0.5"/>
 <path d="M10.5 0 H13 V2.5 H15.5 V5 H13 V7.5 H10.5 V5 H8 V2.5 H10.5Z" fill="#B02828" stroke="#701010" stroke-width="0.5"/>
 <path d="M2.5 8.5 H5 V11 H7.5 V13.5 H5 V16 H2.5 V13.5 H0 V11 H2.5Z" fill="#B02828" stroke="#701010" stroke-width="0.5"/>
 <path d="M10.5 7 H13 V9.5 H15.5 V12 H13 V14.5 H10.5 V12 H8 V9.5 H10.5Z" fill="#2EA82E" stroke="#166A16" stroke-width="0.5"/>
</svg>
<!-- code -->
<div class="a mono" style="left:287px;top:253px;font-size:11.67px;line-height:15px;white-space:pre;will-change:transform"><span style="color:#008000">    set_output_default</span>
<span style="color:#800000">            -- Use standard output as default output.</span>
<span style="color:#000080;font-weight:bold">        do</span>
<span style="color:#008000">            default_output </span><span style="color:#FF0000">:=</span><span style="color:#008000"> output</span>
<span style="color:#000080;font-weight:bold">        end</span></div>
<svg class="a" style="left:264px;top:296px" width="14" height="14" viewBox="0 0 14 14">
 <circle cx="7" cy="6.5" r="5.8" fill="#D4D0C8" stroke="#444" stroke-width="1"/><path d="M4.3 1.8 L11.8 6.5 L4.3 11Z" fill="#10D010" stroke="#0A8A0A" stroke-width="0.6"/>
</svg>
<svg class="a" style="left:264px;top:311px" width="14" height="14" viewBox="0 0 14 14">
 <circle cx="7" cy="6" r="5.8" fill="#D4D0C8" stroke="#444" stroke-width="1"/>
</svg>
<!-- tabs -->
<!-- /EDITOR -->

<!-- TABS -->
<style>
.tab{position:absolute;top:536px;height:20px;border:1px solid #919B9C;border-bottom:none;border-radius:3px 3px 0 0;background:linear-gradient(#FEFEFE,#F4F3EE 60%,#ECEBE5)}
.tabsel{position:absolute;top:534px;height:23px;border:1px solid #919B9C;border-bottom:none;border-top:none;border-radius:3px 3px 0 0;background:#FCFCFE}
</style>
<div class="tab" style="left:261px;width:65px"></div>
<svg class="a" style="left:267px;top:539px" width="16" height="15" viewBox="0 0 16 15">
 <rect x="0.5" y="0.5" width="15" height="14" fill="#EEF2FC" stroke="#2A5ED8"/><rect x="0.5" y="0.5" width="15" height="2" fill="#2A5ED8"/>
 <path d="M3 5.5 H13 M3 7.5 H13 M3 9.5 H13 M3 11.5 H13" stroke="#7A8CB8"/>
</svg>
<div class="t" style="left:290.00px;top:539px;transform:scaleX(0.9394);transform-origin:0 0">Output</div>
<div class="tab" style="left:327px;width:72px"></div>
<svg class="a" style="left:333px;top:538px" width="17" height="17" viewBox="0 0 17 17">
 <rect x="0.6" y="2.6" width="12" height="13.8" fill="#F2F2FD" stroke="#2A62D8" stroke-width="1.2"/><path d="M2.5 10.5 H5 M2.5 12.5 H5 M2.5 14.5 H10" stroke="#A0A0B0" stroke-width="0.8"/>
 <g transform="rotate(-45 9 8.5)"><rect x="3" y="6" width="10.5" height="5.2" fill="#2CC82C" stroke="#0E5A0E" stroke-width="0.9"/><path d="M6 7.2 H13" stroke="#7CF07C" stroke-width="1"/><rect x="13.5" y="6" width="3" height="5.2" fill="#E84A10"/><path d="M3 6 L0.5 8.6 L3 11.2Z" fill="#E8D020" stroke="#0E5A0E" stroke-width="0.6"/></g>
</svg>
<div class="t" style="left:354.57px;top:539px;transform:scaleX(0.9605);transform-origin:0 0">Diagram</div>
<div class="tab" style="left:400px;width:58px"></div>
<svg class="a" style="left:406px;top:540px" width="15" height="11" viewBox="0 0 15 11"><ellipse cx="7.5" cy="5.5" rx="6.8" ry="4.8" fill="#1C82D8" stroke="#0A4FA0" stroke-width="0.8"/><ellipse cx="6" cy="3.8" rx="3.5" ry="1.6" fill="#8CCBF6"/></svg>
<div class="t" style="left:428.01px;top:539px;transform:scaleX(0.8902);transform-origin:0 0">Class</div>
<div class="tab" style="left:531px;width:60px"></div>
<svg class="a" style="left:535px;top:538px" width="16" height="16" viewBox="0 0 16 16">
 <rect x="0.5" y="0.5" width="15" height="12" fill="#F2F5FC" stroke="#2A5ED8"/><rect x="0.5" y="0.5" width="15" height="2" fill="#2A5ED8"/>
 <path d="M8 9 L8 3.5 A5.5 5.5 0 0 1 13.3 10.5Z" fill="#38A838"/><path d="M8 9 L13.3 10.5 A5.5 5.5 0 0 1 3 11.5Z" fill="#E8D020"/><path d="M8 9 L3 11.5 A5.5 5.5 0 0 1 8 3.5Z" fill="#D03838"/>
</svg>
<div class="t" style="left:556.98px;top:539px;transform:scaleX(1.0014);transform-origin:0 0">Metric</div>
<div class="tab" style="left:592px;width:107px"></div>
<svg class="a" style="left:598px;top:538px" width="16" height="15" viewBox="0 0 16 15">
 <rect x="0.5" y="0.5" width="15" height="14" fill="#F2F5FC" stroke="#2A5ED8"/><rect x="0.5" y="0.5" width="15" height="2" fill="#2A5ED8"/>
 <path d="M2.5 5 L5 7.5 L2.5 10" stroke="#223" fill="none"/><path d="M6 10.5 H7 M8 10.5 H9 M10 6 H14 M10 8 H14 M10 10 H14 M10 12 H14" stroke="#555"/>
</svg>
<div class="t" style="left:619.38px;top:539px;transform:scaleX(0.9679);transform-origin:0 0">External Output</div>
<div class="tab" style="left:700px;width:75px"></div>
<svg class="a" style="left:705px;top:538px" width="16" height="16" viewBox="0 0 16 16">
 <path d="M1 8 L8 4 L15 8 L8 12Z" fill="#A8B0C8" stroke="#6A7498" stroke-width="0.6" transform="translate(0,2)"/><path d="M1 7 L8 3 L15 7 L8 11Z" fill="#E8ECF8" stroke="#6A7498" stroke-width="0.6"/>
</svg>
<div class="t" style="left:727.53px;top:539px;transform:scaleX(0.9506);transform-origin:0 0">C Output</div>
<div class="tab" style="left:776px;width:59px"></div>
<svg class="a" style="left:781px;top:538px" width="15" height="15" viewBox="0 0 15 15">
 <circle cx="7.5" cy="7.5" r="7" fill="#E84020" stroke="#B02810" stroke-width="0.6"/><circle cx="6" cy="5" r="3" fill="#F88060" opacity="0.5"/>
 <path d="M4.8 4.8 L10.2 10.2 M10.2 4.8 L4.8 10.2" stroke="#fff" stroke-width="2"/>
</svg>
<div class="t" style="left:802.05px;top:539px;transform:scaleX(0.9310);transform-origin:0 0">Errors</div>
<div class="tab" style="left:837px;width:77px"></div>
<svg class="a" style="left:842px;top:537px" width="16" height="16" viewBox="0 0 16 16">
 <path d="M8 1 L15.5 15 H0.5Z" fill="#F8E820" stroke="#404000" stroke-width="1" stroke-linejoin="round"/>
 <path d="M8 5.5 V10.5" stroke="#000" stroke-width="1.8"/><circle cx="8" cy="12.8" r="1" fill="#000"/>
</svg>
<div class="t" style="left:863.36px;top:539px;transform:scaleX(0.9873);transform-origin:0 0">Warnings</div>
<div class="tabsel" style="left:457px;width:74px"></div>
<div class="a" style="left:457px;top:534px;width:74px;height:3px;border-radius:3px 3px 0 0;background:linear-gradient(#E68B2C,#FFC73C)"></div>
<svg class="a" style="left:464px;top:539px" width="16" height="16" viewBox="0 0 16 16">
 <path d="M4 5 H7.5 V8.5 H11 V12 H7.5 V15.5 H4 V12 H0.5 V8.5 H4Z" fill="#2EA82E" stroke="#166A16" stroke-width="0.8"/>
 <path d="M10 2.5 H15 M11 4.5 H15 M10 6.5 H15" stroke="#444" stroke-width="1"/>
</svg>
<div class="t" style="left:486.99px;top:540px;transform:scaleX(0.9574);transform-origin:0 0">Feature</div>
<!-- /TABS -->

<!-- DEBUG -->
<div class="a" style="left:258px;top:556px;width:704px;height:1px;background:#ACA899"></div>
<div class="a" style="left:258px;top:557px;width:704px;height:1px;background:#fff"></div>
<div class="a" style="left:258px;top:563px;width:704px;height:18px;border-top:1px solid #fff;border-left:1px solid #fff;border-bottom:1px solid #8E8B7C;border-right:1px solid #8E8B7C"></div>
<div class="t" style="left:259.55px;top:566px;transform:scaleX(0.9887);transform-origin:0 0">Debugging</div>
<svg class="a" style="left:323px;top:571px" width="10" height="6"><path d="M0.5 0.5 H9.5 L5 5.5Z" fill="#000"/></svg>
<svg class="a" style="left:339px;top:567px" width="12" height="11" viewBox="0 0 12 11">
 <path d="M1.5 1.5 L10.5 9.5 M10.5 1.5 L1.5 9.5" stroke="#ACA899" stroke-width="2.6"/><path d="M1 0.8 L6 5 L11 0.8" stroke="#fff" stroke-width="0.5" fill="none"/>
</svg>
<svg class="a" style="left:356px;top:567px" width="12" height="11" viewBox="0 0 12 11">
 <path d="M2.5 2.5 L9.5 8.5" stroke="#38A828" stroke-width="2"/><path d="M1 1 H6 L1 6Z" fill="#38A828"/><path d="M11 10 H6 L11 5Z" fill="#38A828"/>
</svg>
<svg class="a" style="left:373px;top:567px" width="12" height="11" viewBox="0 0 12 11">
 <path d="M1.5 1.5 H10.5 V7.5 H7 L5 10 V7.5 H1.5Z" fill="#F8E840" stroke="#A89000" stroke-width="0.8"/>
</svg>
<div class="t" style="left:391px;top:566px;font-size:10px;color:#555">0x</div>
<div class="t" style="left:434.5px;top:566px;color:#000040">{</div>
<div class="t" style="left:438.4px;top:566px;color:#0000FF;transform:scaleX(0.972);transform-origin:0 0">STD_FILES</div>
<div class="t" style="left:495.5px;top:566px;color:#000040">}</div>
<div class="t" style="left:500.01px;top:566px;color:#008000;transform:scaleX(0.9807);transform-origin:0 0">.set_output_default</div>
<div class="a" style="left:914px;top:572px;width:8px;height:5px;border:1px solid #2A5ED8;border-top-width:2px;background:#E6ECFB"></div>
<div class="a" style="left:930px;top:567px;width:10px;height:10px;border:1px solid #2A5ED8;border-top-width:2px;background:linear-gradient(135deg,#fff,#C8D6F6)"></div>
<svg class="a" style="left:947px;top:567px" width="11" height="10" viewBox="0 0 11 10">
 <path d="M1.8 1.5 L9.2 8.5 M9.2 1.5 L1.8 8.5" stroke="#A8A598" stroke-width="3.2" stroke-linecap="round"/><path d="M2 1.7 L9 8.3 M9 1.7 L2 8.3" stroke="#C8C6BA" stroke-width="0.8"/>
</svg>
<!-- frame -->
<div class="a" style="left:258px;top:581px;width:702px;height:196px;border-left:1px solid #ACA899;border-top:1px solid #8C9AA0;border-right:1px solid #8C9AA0;box-shadow:inset 1px 0 0 #8C9AA0;background:#fff"></div>
<div class="a" style="left:258px;top:777px;width:1px;height:22px;background:#ACA899"></div>
<!-- left grid -->
<div class="a" style="left:263px;top:586px;width:364px;height:191px;border-left:1px solid #C8C8C8;border-right:1px solid #B0B0B0;border-bottom:1px solid #ACA899;background:#fff"></div>
<div class="a" style="left:264px;top:586px;width:363px;height:20px;background:#ECE9D8;border:1px solid #000"></div>
<div class="a" style="left:413px;top:590px;width:1px;height:12px;background:#ACA899;box-shadow:1px 0 0 #fff"></div>
<div class="a" style="left:564px;top:590px;width:1px;height:12px;background:#ACA899;box-shadow:1px 0 0 #fff"></div>
<div class="t" style="left:272.71px;top:590px;transform:scaleX(1.0078);transform-origin:0 0">Name</div>
<div class="t" style="left:424.53px;top:590px;transform:scaleX(0.9932);transform-origin:0 0">Value</div>
<div class="t" style="left:575.90px;top:590px;transform:scaleX(0.9429);transform-origin:0 0">Type</div>
<!-- left scrollbar -->
<div class="a" style="left:264px;top:760px;width:362px;height:16px;background:linear-gradient(90deg,#F3F1EC,#FEFEFB);border-top:1px solid #EEEDE5"></div><div class="a" style="left:265px;top:761px;width:14px;height:14px;border-radius:3px;background:linear-gradient(135deg,#D4E2FE,#A8C0F4);box-shadow:inset 0 -1px 0 #A8C0F0, 0 1px 0 #fff"></div><svg class="a" style="left:268px;top:763px" width="8" height="10"><path d="M5.5 1.5 L2 5 L5.5 8.5" stroke="#4D6185" stroke-width="2.3" fill="none"/></svg><div class="a" style="left:282px;top:761px;width:204px;height:14px;border-radius:3px;background:linear-gradient(90deg,#C0D2FB,#AEC6F6 50%,#BCD0FA);box-shadow:inset 1px 0 0 #E6EEFE,inset 0 -1px 0 #A0B8EC, 0 1px 0 #fff"></div><svg class="a" style="left:380px;top:764px" width="8" height="8"><path d="M0.5 0 V8 M2.5 0 V8 M4.5 0 V8 M6.5 0 V8" stroke="#EEF4FE" stroke-width="1"/><path d="M1.5 0 V8 M3.5 0 V8 M5.5 0 V8 M7.5 0 V8" stroke="#8CA8E0" stroke-width="1"/></svg><div class="a" style="left:610px;top:761px;width:14px;height:14px;border-radius:3px;background:linear-gradient(135deg,#D4E2FE,#A8C0F4);box-shadow:inset 0 -1px 0 #A8C0F0, 0 1px 0 #fff"></div><svg class="a" style="left:613px;top:763px" width="8" height="10"><path d="M2.5 1.5 L6 5 L2.5 8.5" stroke="#4D6185" stroke-width="2.3" fill="none"/></svg>
<!-- splitter -->
<div class="a" style="left:627px;top:586px;width:5px;height:190px;background:#F4F3EE"></div>
<div class="a" style="left:631px;top:586px;width:1px;height:190px;background:#B0B0B0"></div>
<!-- right grid -->
<div class="a" style="left:632px;top:586px;width:326px;height:191px;border-right:1px solid #B0B0B0;border-bottom:1px solid #ACA899;background:#fff"></div>
<div class="a" style="left:632px;top:586px;width:326px;height:20px;background:#ECE9D8;border:1px solid #000"></div>
<div class="a" style="left:782px;top:590px;width:1px;height:12px;background:#ACA899;box-shadow:1px 0 0 #fff"></div>
<div class="a" style="left:932px;top:590px;width:1px;height:12px;background:#ACA899;box-shadow:1px 0 0 #fff"></div>
<div class="t" style="left:641.57px;top:590px;transform:scaleX(0.9795);transform-origin:0 0">Name</div>
<div class="t" style="left:790.99px;top:590px;transform:scaleX(1.0309);transform-origin:0 0">Value</div>
<div class="a" style="left:943px;top:590px;width:14px;height:14px;overflow:hidden"><div class="t" style="left:0;top:0">Type</div></div>
<div class="a" style="left:633px;top:621px;width:325px;height:1px;background:#DCDCDC"></div>
<div class="a" style="left:633px;top:637px;width:325px;height:1px;background:#DCDCDC"></div>
<div class="a" style="left:633px;top:653px;width:325px;height:1px;background:#DCDCDC"></div>
<div class="a" style="left:633px;top:669px;width:325px;height:1px;background:#DCDCDC"></div>
<div class="a" style="left:782px;top:606px;width:1px;height:63px;background:#DCDCDC"></div>
<div class="a" style="left:932px;top:606px;width:1px;height:63px;background:#DCDCDC"></div>
<!-- tree -->
<div class="a" style="left:638px;top:610px;width:9px;height:9px;border:1px solid #919B9C;background:#fff"></div>
<div class="a" style="left:640px;top:614px;width:5px;height:1px;background:#000"></div>
<svg class="a" style="left:656px;top:607px" width="15" height="14" viewBox="0 0 15 14">
 <path d="M0 2.5 H15 M0 5.5 H15 M0 8.5 H15 M0 11.5 H15 M2.5 0 V14 M5.5 0 V14 M8.5 0 V14 M11.5 0 V14" stroke="#C03020" stroke-width="1.3"/>
</svg>
<div class="t" style="left:673.75px;top:608px;transform:scaleX(0.9450);transform-origin:0 0">Current object</div>
<div class="t" style="left:783.35px;top:608px;transform:scaleX(0.9766);transform-origin:0 0">&lt;0x32A8760&gt;</div>
<div class="a" style="left:933px;top:606px;width:24px;height:48px;overflow:hidden"><div class="t" style="left:1px;top:2px;transform:scaleX(0.95);transform-origin:0 0">STD_FILES</div><div class="t" style="left:1px;top:34px;transform:scaleX(0.95);transform-origin:0 0">NONE</div></div>
<div class="a" style="left:657px;top:620px;width:1px;height:6px;background:#000"></div>
<div class="a" style="left:653px;top:626px;width:9px;height:9px;border:1px solid #919B9C;background:#fff"></div>
<div class="a" style="left:655px;top:630px;width:5px;height:1px;background:#000"></div>
<div class="a" style="left:662px;top:630px;width:8px;height:1px;background:#000"></div>
<div class="a" style="left:657px;top:635px;width:1px;height:27px;background:#000"></div>
<svg class="a" style="left:670px;top:623px" width="16" height="14" viewBox="0 0 16 14">
 <path d="M3 5 H6.5 V8 H9.5 V11 H6.5 V14 H3 V11 H0 V8 H3Z" fill="#3AA830" stroke="#1E6A18" stroke-width="0.7"/>
 <rect x="11.5" y="0.5" width="3" height="6" rx="1.5" fill="#D02020"/><circle cx="13" cy="9" r="1.6" fill="#D02020"/>
</svg>
<div class="t" style="left:687.53px;top:624px;color:#3333CC;transform:scaleX(0.9655);transform-origin:0 0">Attributes</div>
<div class="a" style="left:672px;top:637px;width:1px;height:10px;background:#000"></div>
<div class="a" style="left:672px;top:646px;width:12px;height:1px;background:#000"></div>
<svg class="a" style="left:686px;top:639px" width="14" height="14" viewBox="0 0 14 14">
 <path d="M0 2.5 H14 M0 5.5 H14 M0 8.5 H14 M0 11.5 H14 M2.5 0 V14 M5.5 0 V14 M8.5 0 V14 M11.5 0 V14" stroke="#A8A8A8" stroke-width="1"/>
</svg>
<div class="t" style="left:703.36px;top:640px;transform:scaleX(0.9633);transform-origin:0 0">default_output</div>
<div class="t" style="left:784.32px;top:640px;transform:scaleX(0.9545);transform-origin:0 0">Void</div>

<div class="a" style="left:653px;top:658px;width:9px;height:9px;border:1px solid #919B9C;background:#fff"></div>
<div class="a" style="left:655px;top:662px;width:5px;height:1px;background:#000"></div>
<div class="a" style="left:657px;top:660px;width:1px;height:5px;background:#000"></div>
<div class="a" style="left:662px;top:662px;width:8px;height:1px;background:#000"></div>
<svg class="a" style="left:670px;top:655px" width="16" height="14" viewBox="0 0 16 14">
 <path d="M3 5 H6.5 V8 H9.5 V11 H6.5 V14 H3 V11 H0 V8 H3Z" fill="#3AA830" stroke="#1E6A18" stroke-width="0.7"/>
 <path d="M11.5 1 L13.5 0.5 V7 M11 7 H15" stroke="#B8A000" stroke-width="1.3" fill="none"/><path d="M12 2 L14 1 V7Z" fill="#F0E040"/>
</svg>
<div class="t" style="left:688.15px;top:656px;color:#3333CC;transform:scaleX(0.9533);transform-origin:0 0">Once routines</div>
<div class="a" style="left:934px;top:606px;width:24px;height:63px;overflow:hidden"></div>
<!-- right scrollbar -->
<div class="a" style="left:633px;top:760px;width:324px;height:16px;background:linear-gradient(90deg,#F3F1EC,#FEFEFB);border-top:1px solid #EEEDE5"></div><div class="a" style="left:633px;top:761px;width:14px;height:14px;border-radius:3px;background:linear-gradient(135deg,#D4E2FE,#A8C0F4);box-shadow:inset 0 -1px 0 #A8C0F0, 0 1px 0 #fff"></div><svg class="a" style="left:636px;top:763px" width="8" height="10"><path d="M5.5 1.5 L2 5 L5.5 8.5" stroke="#4D6185" stroke-width="2.3" fill="none"/></svg><div class="a" style="left:650px;top:761px;width:162px;height:14px;border-radius:3px;background:linear-gradient(90deg,#C0D2FB,#AEC6F6 50%,#BCD0FA);box-shadow:inset 1px 0 0 #E6EEFE,inset 0 -1px 0 #A0B8EC, 0 1px 0 #fff"></div><svg class="a" style="left:727px;top:764px" width="8" height="8"><path d="M0.5 0 V8 M2.5 0 V8 M4.5 0 V8 M6.5 0 V8" stroke="#EEF4FE" stroke-width="1"/><path d="M1.5 0 V8 M3.5 0 V8 M5.5 0 V8 M7.5 0 V8" stroke="#8CA8E0" stroke-width="1"/></svg><div class="a" style="left:941px;top:761px;width:14px;height:14px;border-radius:3px;background:linear-gradient(135deg,#D4E2FE,#A8C0F4);box-shadow:inset 0 -1px 0 #A8C0F0, 0 1px 0 #fff"></div><svg class="a" style="left:944px;top:763px" width="8" height="10"><path d="M2.5 1.5 L6 5 L2.5 8.5" stroke="#4D6185" stroke-width="2.3" fill="none"/></svg>
<!-- bottom tabs -->
<div class="a" style="left:310px;top:779px;width:57px;height:19px;border:1px solid #919B9C;border-bottom:none;border-radius:3px 3px 0 0;background:linear-gradient(#FEFEFE,#F4F3EE 60%,#ECEBE5)"></div>
<div class="t" style="left:314.76px;top:782px;transform:scaleX(1.0263);transform-origin:0 0">Watch #1</div>
<div class="a" style="left:259px;top:777px;width:52px;height:22px;border:1px solid #919B9C;border-top:none;border-bottom:none;background:#FCFCFE"></div>
<div class="a" style="left:259px;top:777px;width:52px;height:3px;border-radius:3px 3px 0 0;background:linear-gradient(#E68B2C,#FFC73C)"></div>
<div class="t" style="left:267.36px;top:783px;transform:scaleX(0.9357);transform-origin:0 0">Objects</div>
<div class="a" style="left:4px;top:799px;width:959px;height:1px;background:#fff"></div>
<div class="a" style="left:4px;top:802px;width:959px;height:1px;background:#ACA899"></div>
<!-- /DEBUG -->

<!-- STATUS -->
<div class="a" style="left:4px;top:802px;width:705px;height:18px;border-left:1px solid #ACA899;border-right:1px solid #fff"></div>
<div class="t" style="left:5.57px;top:804px;transform:scaleX(0.9787);transform-origin:0 0">Step completed</div>
<div class="a" style="left:711px;top:802px;width:99px;height:17px;border:1px solid #686868;border-radius:3px;background:linear-gradient(#fff 70%,#F0F0F0);box-shadow:inset 1px 1px 0 #C8C8C8"></div>
<div class="a" style="left:813px;top:802px;width:38px;height:18px;border-top:1px solid #ACA899;border-left:1px solid #ACA899;border-right:1px solid #fff"></div>
<div class="t" style="left:816.53px;top:805px;transform:scaleX(0.9387);transform-origin:0 0">simple</div>
<div class="a" style="left:853px;top:802px;width:50px;height:18px;border-top:1px solid #ACA899;border-left:1px solid #ACA899;border-right:1px solid #fff"></div>
<div class="t" style="left:867.00px;top:805px;transform:scaleX(0.8877);transform-origin:0 0">21:1</div>
<div class="a" style="left:905px;top:802px;width:18px;height:18px;border-top:1px solid #ACA899;border-left:1px solid #ACA899;border-right:1px solid #fff"></div>
<svg class="a" style="left:906px;top:803px" width="16" height="16" viewBox="0 0 16 16">
 <path d="M1.5 1.5 H9 L12.5 5 V14.5 H1.5Z" fill="#EEF2FC" stroke="#3A6AD8"/><path d="M9 1.5 V5 H12.5" fill="#C8D8F8" stroke="#3A6AD8"/>
 <path d="M2 9 L6 13 L15.5 3.5" stroke="#28A028" stroke-width="3" fill="none"/>
</svg>
<div class="a" style="left:925px;top:802px;width:18px;height:18px;border-top:1px solid #ACA899;border-left:1px solid #ACA899;border-right:1px solid #fff"></div>
<svg class="a" style="left:926px;top:803px" width="16" height="16" viewBox="0 0 16 16">
 <path d="M1 10 L8 6.5 L15 10 L8 13.5Z" fill="#9098B8" transform="translate(0,1.5)"/><path d="M1 8.5 L8 5 L15 8.5 L8 12Z" fill="#B8C0D8" transform="translate(0,0.8)"/><path d="M1 8 L8 4.5 L15 8 L8 11.5Z" fill="#EEF0F8" stroke="#7078A0" stroke-width="0.6"/>
 <path d="M3 6 L7 9.5 L14.5 1.5" stroke="#28A028" stroke-width="2.6" fill="none"/>
</svg>
<div class="a" style="left:945px;top:802px;width:18px;height:18px;border-top:1px solid #ACA899;border-left:1px solid #ACA899"></div>
<div class="a" style="left:948px;top:805px;width:5px;height:12px;background:linear-gradient(90deg,#2A5CD0,#8AB4F8 60%,#3A6AD8);border:1px solid #10307A;border-radius:1px"></div>
<div class="a" style="left:955px;top:805px;width:5px;height:12px;background:linear-gradient(90deg,#2A5CD0,#8AB4F8 60%,#3A6AD8);border:1px solid #10307A;border-radius:1px"></div>
<!-- /STATUS -->
</body></html>
